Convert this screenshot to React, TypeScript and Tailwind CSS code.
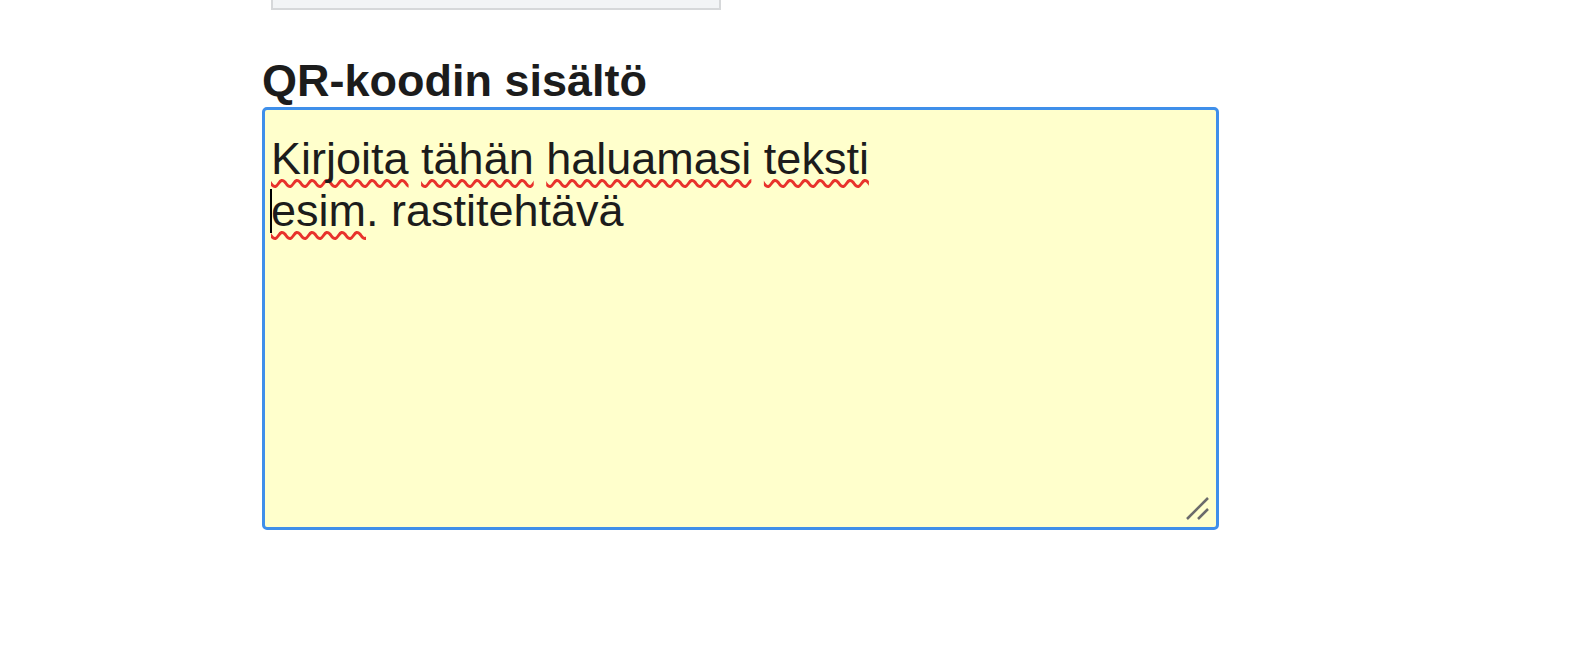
const words = [
  { text: "Kirjoita", wavy: true },
  { text: " ", wavy: false },
  { text: "tähän", wavy: true },
  { text: " ", wavy: false },
  { text: "haluamasi", wavy: true },
  { text: " ", wavy: false },
  { text: "teksti", wavy: true },
];

// red spell-check squiggle, drawn under the word without skipping descenders
const wavy =
  "underline decoration-wavy decoration-[#e8322b] decoration-[3px] underline-offset-[5px] [text-decoration-skip-ink:none]";

const ResizeGrip = () => (
  <svg
    className="absolute right-[6px] bottom-[6px]"
    width="26"
    height="26"
    viewBox="0 0 26 26"
  >
    <line x1="3" y1="24" x2="24" y2="3" stroke="#6b6b6b" strokeWidth="2.5" />
    <line x1="14" y1="24" x2="24" y2="14" stroke="#6b6b6b" strokeWidth="2.5" />
  </svg>
);

export default function App() {
  return (
    <div className="h-[652px] w-full bg-white overflow-hidden font-['Liberation_Sans',Arial,sans-serif] text-[#1c1c1c]">
      <div className="flex flex-col pl-[262px]">
        {/* bottom edge of the field above, scrolled off the top */}
        <div className="ml-[9px] h-[10px] w-[450px] border-x-[2px] border-b-[2px] border-[#d6d8da] bg-[#f2f4f6]" />

        <label className="mt-[45px] text-[45px] font-bold leading-[1.15]">
          QR-koodin sisältö
        </label>

        {/* textarea look-alike, focused */}
        <div className="relative h-[423px] w-[957px] shrink-0 rounded-[5px] border-[3px] border-[#3f8fea] bg-[#ffffcc] pl-[6px] pt-[23px] text-[45px] leading-[1.15]">
          <div>
            {words.map((w, i) =>
              w.wavy ? (
                <span key={i} className={wavy}>
                  {w.text}
                </span>
              ) : (
                <span key={i}>{w.text}</span>
              )
            )}
          </div>
          <div className="relative">
            <span className="absolute left-[-1px] top-[4px] h-[44px] w-[2px] bg-black" />
            <span className={wavy}>esim</span>
            <span>. rastitehtävä</span>
          </div>
          <ResizeGrip />
        </div>

        <div className="ml-[78px] mt-[114px] shrink-0 text-[45px] font-bold leading-[1.15] text-[#8a2a7e]">
          Tallenna
        </div>
      </div>
    </div>
  );
}
